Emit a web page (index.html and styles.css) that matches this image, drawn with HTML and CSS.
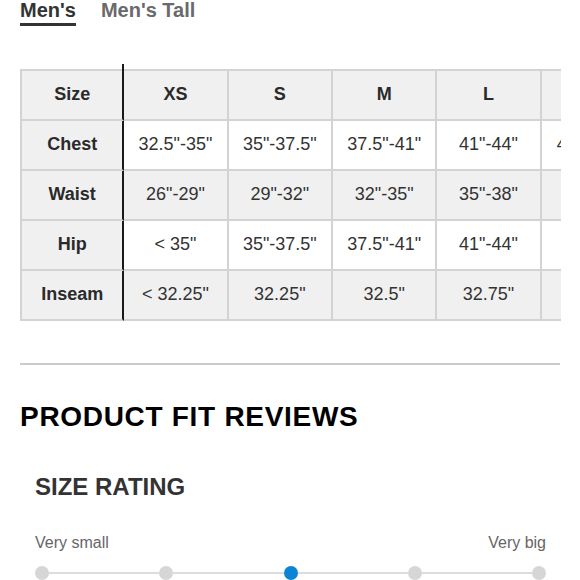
FILE: index.html
```html
<!DOCTYPE html>
<html>
<head>
<meta charset="utf-8">
<link rel="stylesheet" href="styles.css">
</head>
<body>
<div class="page">
  <div class="tabs">
    <div class="tab active">Men's</div>
    <div class="tab">Men's Tall</div>
  </div>
  <div class="table-wrap">
    <table class="sizes">
      <tr class="gray">
        <th class="label first">Size</th><th>XS</th><th>S</th><th>M</th><th>L</th><th></th>
      </tr>
      <tr class="white">
        <th class="label">Chest</th><td>32.5"-35"</td><td>35"-37.5"</td><td>37.5"-41"</td><td>41"-44"</td><td class="edge">44"-47"</td>
      </tr>
      <tr class="gray">
        <th class="label">Waist</th><td>26"-29"</td><td>29"-32"</td><td>32"-35"</td><td>35"-38"</td><td></td>
      </tr>
      <tr class="white">
        <th class="label">Hip</th><td>&lt; 35"</td><td>35"-37.5"</td><td>37.5"-41"</td><td>41"-44"</td><td></td>
      </tr>
      <tr class="gray">
        <th class="label">Inseam</th><td>&lt; 32.25"</td><td>32.25"</td><td>32.5"</td><td>32.75"</td><td></td>
      </tr>
    </table>
  </div>
  <hr class="rule">
  <h2 class="title">PRODUCT FIT REVIEWS</h2>
  <h3 class="subtitle">SIZE RATING</h3>
  <div class="scale-labels">
    <span>Very small</span>
    <span>Very big</span>
  </div>
  <div class="slider">
    <span class="dot"></span><span class="seg"></span>
    <span class="dot"></span><span class="seg"></span>
    <span class="dot on"></span><span class="seg"></span>
    <span class="dot"></span><span class="seg"></span>
    <span class="dot"></span>
  </div>
</div>
</body>
</html>
```
FILE: styles.css
```css
html, body {
  margin: 0;
  padding: 0;
  background: #fff;
}
body {
  font-family: "Liberation Sans", Arial, sans-serif;
  color: #333;
}
.page {
  width: 540px;
  padding: 0 20px;
  overflow: hidden;
  height: 580px;
}
.tabs {
  display: flex;
  gap: 25px;
}
.tab {
  font-size: 20px;
  font-weight: bold;
  line-height: 20px;
  padding-bottom: 3px;
  border-bottom: 3px solid transparent;
  color: #6a6a6a;
}
.tab.active {
  color: #333;
  border-bottom-color: #333;
}
.table-wrap {
  margin-top: 38px;
  padding-top: 5px;
  width: 541px;
  overflow: hidden;
}
.sizes {
  border-spacing: 0;
  table-layout: fixed;
  width: 626px;
  font-size: 18px;
}
.sizes th, .sizes td {
  width: 102px;
  height: 46px;
  padding: 0 0 2px 0;
  text-align: center;
  vertical-align: middle;
  border-right: 2px solid #d3d3d3;
  border-bottom: 2px solid #d3d3d3;
  color: #333;
  white-space: nowrap;
}
.sizes th {
  font-weight: bold;
  color: #2a2a2a;
}
.sizes tr:first-child th, .sizes tr:first-child td {
  border-top: 2px solid #d3d3d3;
}
.sizes .label {
  width: 100px;
  border-left: 2px solid #d3d3d3;
  border-right: 2px solid #1a1a1a;
  background: #f0f0f0;
}
.sizes .edge {
  text-align: left;
  padding-left: 15px;
  overflow: hidden;
}
.sizes .first {
  position: relative;
}
.sizes .first::before {
  content: "";
  position: absolute;
  right: -2px;
  top: -7px;
  width: 2px;
  height: 7px;
  background: #1a1a1a;
}
.gray th, .gray td {
  background: #f0f0f0;
}
.white td {
  background: #fff;
}
.rule {
  margin: 42px 0 0 0;
  border: none;
  height: 2px;
  background: #cbcbcb;
}
.title {
  margin: 36px 0 0 0;
  font-size: 28px;
  line-height: 32px;
  letter-spacing: 0.7px;
  font-weight: bold;
  color: #000;
}
.subtitle {
  margin: 40px 0 0 0;
  padding-left: 15px;
  font-size: 24px;
  line-height: 28px;
  font-weight: bold;
  color: #333;
}
.scale-labels {
  margin-top: 32px;
  padding: 0 14px 0 15px;
  display: flex;
  justify-content: space-between;
  font-size: 16px;
  line-height: 20px;
  color: #666;
}
.slider {
  margin-top: 13px;
  padding: 0 14px 0 15px;
  display: flex;
  align-items: center;
}
.dot {
  width: 14px;
  height: 14px;
  border-radius: 50%;
  background: #d6d6d6;
  flex: none;
}
.dot.on {
  background: #0b84d6;
}
.seg {
  flex: 1;
  height: 2px;
  background: #dcdcdc;
}
```
